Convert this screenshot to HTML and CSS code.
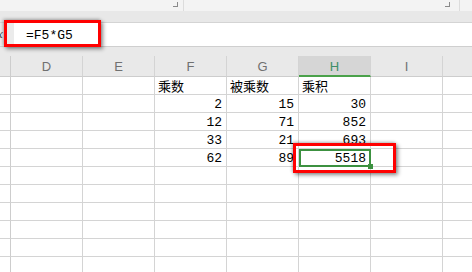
FILE: index.html
```html
<!doctype html>
<html>
  <head>
    <meta charset="UTF-8" />
    <link rel="stylesheet" href="styles.css">
  </head>
  <body>
    <div class="ribbon">
      <div class="group group-first"><span class="launcher"></span></div>
      <div class="group group-second"><span class="launcher"></span></div>
    </div>
    <div class="band"></div>
    <div class="formula-row">
      <div class="fx">x</div>
      <div class="fx-pad"></div>
      <div class="formula">=F5*G5</div>
    </div>
    <div class="sheet">
      <div class="corner"></div>
      <div class="col-head">D</div>
      <div class="col-head">E</div>
      <div class="col-head">F</div>
      <div class="col-head">G</div>
      <div class="col-head active">H</div>
      <div class="col-head">I</div>
      <div class="col-head"></div>

      <div class="row-head"></div>
      <div class="cell"></div><div class="cell"></div>
      <div class="cell text">乘数</div>
      <div class="cell text">被乘数</div>
      <div class="cell text">乘积</div>
      <div class="cell"></div><div class="cell"></div>

      <div class="row-head"></div>
      <div class="cell"></div><div class="cell"></div>
      <div class="cell num">2</div>
      <div class="cell num">15</div>
      <div class="cell num">30</div>
      <div class="cell"></div><div class="cell"></div>

      <div class="row-head"></div>
      <div class="cell"></div><div class="cell"></div>
      <div class="cell num">12</div>
      <div class="cell num">71</div>
      <div class="cell num">852</div>
      <div class="cell"></div><div class="cell"></div>

      <div class="row-head"></div>
      <div class="cell"></div><div class="cell"></div>
      <div class="cell num">33</div>
      <div class="cell num">21</div>
      <div class="cell num">693</div>
      <div class="cell"></div><div class="cell"></div>

      <div class="row-head"></div>
      <div class="cell"></div><div class="cell"></div>
      <div class="cell num">62</div>
      <div class="cell num">89</div>
      <div class="cell num selected">5518<span class="handle"></span></div>
      <div class="cell"></div><div class="cell"></div>

      <div class="row-head"></div>
      <div class="cell"></div><div class="cell"></div><div class="cell"></div>
      <div class="cell"></div><div class="cell"></div><div class="cell"></div><div class="cell"></div>

      <div class="row-head"></div>
      <div class="cell"></div><div class="cell"></div><div class="cell"></div>
      <div class="cell"></div><div class="cell"></div><div class="cell"></div><div class="cell"></div>

      <div class="row-head"></div>
      <div class="cell"></div><div class="cell"></div><div class="cell"></div>
      <div class="cell"></div><div class="cell"></div><div class="cell"></div><div class="cell"></div>

      <div class="row-head"></div>
      <div class="cell"></div><div class="cell"></div><div class="cell"></div>
      <div class="cell"></div><div class="cell"></div><div class="cell"></div><div class="cell"></div>

      <div class="row-head"></div>
      <div class="cell"></div><div class="cell"></div><div class="cell"></div>
      <div class="cell"></div><div class="cell"></div><div class="cell"></div><div class="cell"></div>

      <div class="row-head"></div>
      <div class="cell"></div><div class="cell"></div><div class="cell"></div>
      <div class="cell"></div><div class="cell"></div><div class="cell"></div><div class="cell"></div>
    </div>
    <div class="mark mark-formula"></div>
    <div class="mark mark-cell"></div>
  </body>
</html>
```

FILE: styles.css
```css
html,
body {
  height: 100%;
}
body {
  background: white;
  color: black;
  font-family: "Liberation Mono", "Noto Sans CJK SC", monospace;
  font-size: 13px;
  margin: 0;
  overflow: hidden;
  position: relative;
  width: 472px;
}
.ribbon {
  background: #f3f3f3;
  display: flex;
  height: 11px;
}
.group {
  border-right: 1px solid #dcdcdc;
  box-sizing: border-box;
  display: flex;
  justify-content: flex-end;
}
.group-first {
  padding-right: 5px;
  width: 184px;
}
.group-second {
  padding-right: 9px;
  width: 276px;
}
.launcher {
  border-bottom: 1px solid #8a8a8a;
  border-right: 1px solid #8a8a8a;
  height: 4px;
  margin-top: 2px;
  width: 4px;
}
.band {
  background: #e8e8e8;
  border-bottom: 1px solid #d4d4d4;
  height: 11px;
}
.formula-row {
  background: #ebebeb;
  border-bottom: 1px solid #cfcfcf;
  display: flex;
  height: 23px;
}
.fx {
  color: #444;
  font-family: "Liberation Serif", serif;
  font-style: italic;
  font-size: 13px;
  line-height: 22px;
  overflow: hidden;
  text-indent: -3px;
  width: 4px;
}
.fx-pad {
  width: 10px;
}
.formula {
  background: white;
  flex-grow: 1;
  line-height: 26px;
  padding-left: 12px;
}
.sheet {
  background: #e9e9e9;
  display: grid;
  grid-template-columns: 11px repeat(7, 72px);
  grid-auto-rows: 18px;
  grid-template-rows: 30px;
}
.corner,
.row-head {
  border-right: 1px solid #cdcdcd;
}
.corner {
  background: #e9e9e9;
  border-bottom: 1px solid #cdcdcd;
  margin-top: 9px;
}
.row-head {
  background: white;
  border-bottom: 1px solid #d4d4d4;
}
.col-head {
  border-bottom: 1px solid #cdcdcd;
  border-right: 1px solid #d4d4d4;
  color: #707070;
  font-family: "Liberation Sans", Arial, sans-serif;
  font-size: 13px;
  line-height: 21px;
  margin-top: 9px;
  text-align: center;
}
.col-head.active {
  background: #d6d6d6;
  border-bottom: 2px solid #4aa14a;
  color: #3f8f6a;
}
.cell {
  background: white;
  border-bottom: 1px solid #d4d4d4;
  border-right: 1px solid #d4d4d4;
  line-height: 20px;
  overflow: visible;
  white-space: nowrap;
}
.text {
  font-family: "Noto Sans CJK SC", sans-serif;
  font-size: 13px;
  line-height: 18px;
  padding-left: 3px;
}
.num {
  padding-right: 4px;
  text-align: right;
}
.selected {
  outline: 2px solid #3c9140;
  outline-offset: -2px;
  position: relative;
}
.handle {
  background: #3c9140;
  bottom: -3px;
  height: 5px;
  position: absolute;
  right: -3px;
  width: 5px;
}
.mark {
  border: 3px solid #ff0000;
  box-shadow: 2px 2px 4px rgba(0, 0, 0, 0.45), -1px -1px 3px rgba(0, 0, 0, 0.25);
  box-sizing: border-box;
  position: absolute;
}
.mark-formula {
  height: 27px;
  left: 4px;
  top: 20px;
  width: 97px;
}
.mark-cell {
  height: 30px;
  left: 293px;
  top: 143px;
  width: 103px;
}
```
